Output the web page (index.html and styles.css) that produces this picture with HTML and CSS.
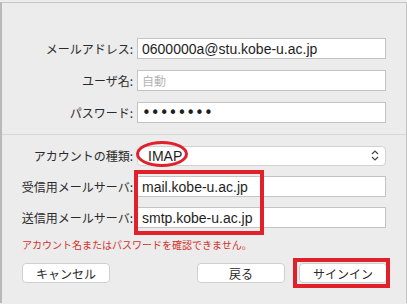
FILE: index.html
```html
<!DOCTYPE html>
<html lang="ja">
<head>
    <meta charset="UTF-8">
    <meta name="viewport" content="width=device-width, initial-scale=1.0">
    <title>アカウントを追加</title>
    <link rel="stylesheet" href="styles.css">
</head>
<body>
    <div class="window">
        <div class="form top-form">
            <label class="label" for="email">メールアドレス:</label>
            <input class="field" id="email" type="text" value="0600000a@stu.kobe-u.ac.jp">

            <label class="label" for="user">ユーザ名:</label>
            <input class="field" id="user" type="text" placeholder="自動">

            <label class="label" for="pass">パスワード:</label>
            <input class="field pass" id="pass" type="password" value="secret12">
        </div>

        <hr class="divider">

        <div class="form bottom-form">
            <label class="label" for="type">アカウントの種類:</label>
            <div class="popup" id="type">
                <span>IMAP</span>
                <svg class="chevrons" width="8" height="11" viewBox="0 0 8 11">
                    <path d="M1 4 L4 1 L7 4 M1 7 L4 10 L7 7" fill="none" stroke="#444" stroke-width="1.2"/>
                </svg>
            </div>

            <label class="label" for="incoming">受信用メールサーバ:</label>
            <input class="field" id="incoming" type="text" value="mail.kobe-u.ac.jp">

            <label class="label" for="outgoing">送信用メールサーバ:</label>
            <input class="field" id="outgoing" type="text" value="smtp.kobe-u.ac.jp">
        </div>

        <p class="error">アカウント名またはパスワードを確認できません。</p>

        <div class="buttons">
            <button class="btn">キャンセル</button>
            <span class="spacer"></span>
            <button class="btn">戻る</button>
            <button class="btn">サインイン</button>
        </div>

        <!-- red marks drawn over the screenshot -->
        <div class="mark ellipse"></div>
        <div class="mark box servers"></div>
        <div class="mark box signin"></div>
    </div>
</body>
</html>
```

FILE: styles.css
```css
body {
    margin: 0;
    padding: 0;
    background-color: #ececec;
    font-family: "Noto Sans CJK JP", "Liberation Sans", sans-serif;
    color: #2a2a2a;
}
.window {
    position: relative;
    height: 301px;
    margin-top: 2px;
    border-top: 1px solid #c6c6c6;
    border-left: 2px solid #b9b9b9;
    border-right: 1px solid #c2c2c2;
    background-color: #ececec;
    box-sizing: border-box;
}
.form {
    display: grid;
    grid-template-columns: 131px 249px;
    grid-auto-rows: 21px;
    column-gap: 4px;
    align-items: center;
}
.top-form {
    padding-top: 35px;
    row-gap: 11px;
}
.bottom-form {
    padding-top: 10px;
    row-gap: 10px;
}
.label {
    text-align: right;
    font-size: 12px;
    line-height: 21px;
    color: #2b2b2b;
}
.field {
    box-sizing: border-box;
    height: 21px;
    width: 100%;
    margin: 0;
    padding: 0 4px;
    border: 1px solid #c3c3c3;
    background: #fff;
    font-family: "Liberation Sans", sans-serif;
    font-size: 14px;
    color: #1e1e1e;
    outline: none;
}
.field::placeholder {
    font-family: "Noto Sans CJK JP", sans-serif;
    font-size: 12px;
    color: #b5b5b5;
}
.pass {
    font-family: "DejaVu Sans", sans-serif;
    font-size: 15px;
    letter-spacing: 0;
}
.divider {
    margin: 11px 0 0;
    border: none;
    border-top: 1px solid #d6d6d6;
}
.popup {
    box-sizing: border-box;
    height: 20px;
    display: flex;
    align-items: center;
    justify-content: space-between;
    padding: 0 6px 0 10px;
    background: #fff;
    border: 1px solid #d2d2d2;
    border-radius: 4px;
    font-family: "Liberation Sans", sans-serif;
    font-size: 14px;
    color: #1e1e1e;
}
.error {
    margin: 10px 0 0 20px;
    font-size: 10px;
    line-height: 14px;
    color: #d2322d;
}
.buttons {
    display: flex;
    gap: 14px;
    padding: 11px 19px 0 20px;
}
.spacer {
    flex: 1;
}
.btn {
    width: 88px;
    height: 20px;
    padding: 0;
    background: #fff;
    border: 1px solid #cfcfcf;
    border-radius: 4px;
    font-family: "Noto Sans CJK JP", sans-serif;
    font-size: 12px;
    color: #2a2a2a;
}
.mark {
    position: absolute;
    box-sizing: border-box;
    pointer-events: none;
}
.ellipse {
    left: 134px;
    top: 138px;
    width: 52px;
    height: 26px;
    border: 3px solid #e0202b;
    border-radius: 50%;
}
.box {
    border: 4px solid #e0202b;
}
.servers {
    left: 132px;
    top: 167px;
    width: 130px;
    height: 65px;
}
.signin {
    left: 291px;
    top: 255px;
    width: 97px;
    height: 30px;
}
```
